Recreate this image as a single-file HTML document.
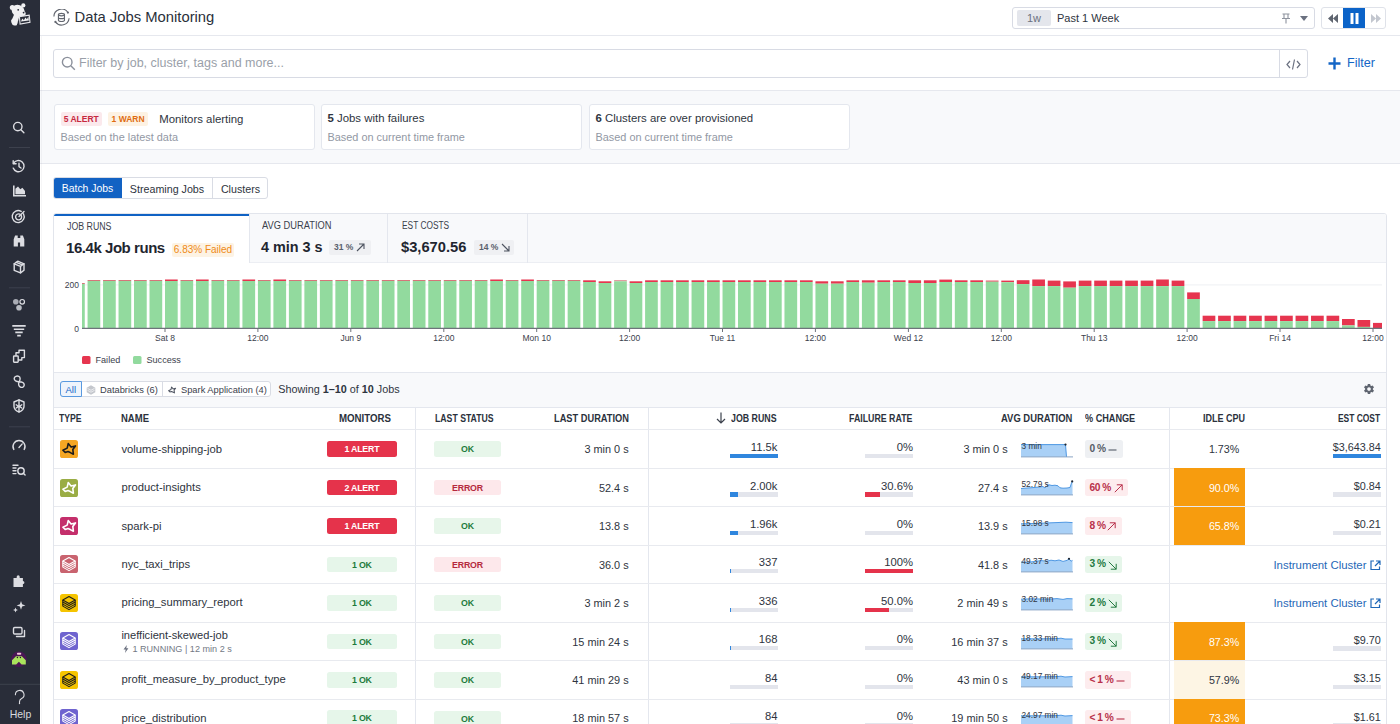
<!DOCTYPE html>
<html><head><meta charset="utf-8">
<style>
*{box-sizing:border-box;margin:0;padding:0}
html,body{width:1400px;height:724px;overflow:hidden;background:#fff;font-family:"Liberation Sans",sans-serif;color:#2e3440}
.abs{position:absolute}
.a{position:absolute}
.t{position:absolute;white-space:nowrap;line-height:1.15}
.bd{font-size:8.8px;font-weight:700;text-align:center;line-height:17.3px;letter-spacing:-0.2px;white-space:nowrap}
#sb{left:0;top:0;width:40px;height:724px;background:#292d39}
#hdr{left:40px;top:0;width:1360px;height:36px;background:#fff;border-bottom:1px solid #e6e8ee}
#srow{left:40px;top:36px;width:1360px;height:55px;background:#fff;border-bottom:1px solid #e6e8ee}
#sum{left:40px;top:91px;width:1360px;height:73px;background:#f8f9fb;border-bottom:1px solid #e6e8ee}
.card{position:absolute;top:13px;height:46px;width:261px;background:#fff;border:1px solid #e4e7ee;border-radius:3px}
.card .l1{position:absolute;left:5.5px;top:6.5px;font-size:11.4px;color:#2e3440;white-space:nowrap;display:flex;align-items:center}
.card .l2{position:absolute;left:5.5px;top:25.5px;font-size:10.9px;color:#9298a4;white-space:nowrap}
.tag{display:inline-block;font-size:8.5px;font-weight:700;padding:0 3.2px;height:14px;line-height:14px;border-radius:2px;margin-right:6.4px}
</style></head><body>
<div id="sb" class="abs">
<svg class="a" style="left:0;top:0" width="40" height="724" viewBox="0 0 40 724">
 <g fill="#f0f0f2">
  <!-- logo -->
  <ellipse cx="18" cy="10.6" rx="6.6" ry="5.6" transform="rotate(20 18 10.6)"/>
  <circle cx="12.3" cy="7.4" r="2.5"/><circle cx="23.3" cy="5.4" r="2.1"/>
  <ellipse cx="22.3" cy="13.6" rx="3.4" ry="2.6"/>
  <path d="M14.5 13.5 L19.5 15.5 L18.2 20.5 L16.5 25.5 L12.2 24 L11.6 20.5 Z"/>
  <ellipse cx="14.3" cy="22" rx="2.9" ry="3.6" transform="rotate(-20 14.3 22)"/>
 </g>
 <path d="M19.4 16.6 L29.2 15.2 L30 22.4 L20.1 24 Z" fill="#292d39" stroke="#e6e6ea" stroke-width="1.1"/>
 <path d="M20.9 21.6 L22.4 18.6 L23.9 20.2 L25.4 17.6 L26.9 19.3 L28.4 16.6 L28.9 20.6 Z" fill="#f0f0f2"/>
 <circle cx="18.2" cy="9.8" r="0.9" fill="#292d39"/><circle cx="23.6" cy="12.6" r="0.9" fill="#292d39"/>
 <g fill="none" stroke="#dcdde2" stroke-width="1.4" stroke-linecap="round" stroke-linejoin="round">
  <!-- search 127.6 -->
  <circle cx="17.8" cy="126.6" r="4.2"/><path d="M20.9 129.7l3 3"/>
  <!-- history 166.3 -->
  <path d="M13.5 163.5a5.6 5.6 0 1 1 -0.3 4.6"/><path d="M13.2 160.8v2.9h2.9"/><path d="M19 163.3v3.3l2 1.4"/>
  <!-- target 216.6 -->
  <path d="M23.5 213.8a6 6 0 1 1-2.3-2.4"/><path d="M21.3 215.6a3 3 0 1 1-1.4-1.4"/><path d="M19 216.5l5-5"/>
  <!-- cube 267 -->
  <path d="M14.2 263.8l3.5-2.6 6.3 2.6v6.4l-3.5 2.7-6.3-2.6z"/><path d="M14.2 263.8l6.3 2.6 3.5-2.6M20.5 266.4v6.5M16.2 262.3l6.2 2.6"/>
  <!-- squares 356 -->
  <rect x="13.6" y="356" width="4.6" height="6.2" rx="0.6"/><path d="M16 355.4v-2.6h3v-2.6h5.4v7.4h-2.6v2.4h-3.4"/>
  <!-- infinity link 381.8 -->
  <path d="M19.2 381.7 C16.5 381.8 14 380.5 14.2 378.4 C14.4 376.3 17 375.6 18.8 376.4 C20.6 377.2 20.4 379.8 19.2 381.7 C18 383.6 18.6 386.8 20.8 387.3 C23 387.8 24.4 386 24.2 384.6 C24 383 22 381.7 19.2 381.7"/>
  <!-- shield 406 -->
  <path d="M19 399.8l5 2.2v4.2c0 3-2.3 4.8-5 5.8-2.7-1-5-2.8-5-5.8v-4.2z"/><path d="M19 400v11.8M16.2 404.8l2.8 2 2.8-2M16.2 408l2.8-1.8 2.8 1.8"/>
  <!-- gauge 445.7 -->
  <path d="M13.8 449.5a6 6 0 1 1 10.4 0"/><path d="M19 447.5l3.2-3.6"/>
  <!-- config 470 -->
  <path d="M13 465.2h5M13 468h3M13 470.8h3M13 473.6h3"/><circle cx="21" cy="471" r="3.2"/><path d="M23.3 473.3l1.8 1.8"/>
  <!-- sparkles 606.5 -->
  <!-- copy 632 -->
  <rect x="13.5" y="627.5" width="8.5" height="6.5" rx="1.2"/><path d="M16.5 636.5h8v-6"/>
  <!-- help ? -->
  <path d="M15.4 694.8a4.3 4.3 0 1 1 6.2 3.8c-1.4.7-2.1 1.5-2.1 3.2v.8" stroke-width="1.1"/><path d="M19.5 703.2v.3" stroke-width="1.3"/>
 </g>
 <g fill="#dcdde2">
  <!-- area chart 191 -->
  <path d="M13 185.5h1.6v9.5h11.4v1.6H13z"/><path d="M15.4 194.2v-5.5l2.6-2.3 2.3 2.9 2.1-1.6 2.6 3.2v3.3z"/>
  <!-- binoculars 242.3 -->
  <path d="M13.7 239.2l1.4-3.7h2.6v2.4h2.6v-2.4h2.6l1.4 3.7v7.3h-4.2v-4h-2.2v4h-4.2z"/>
  <!-- hexagons 303.7 -->
  <circle cx="15.8" cy="301.8" r="2.8" fill="#a9acb4"/><circle cx="22.2" cy="301.8" r="2.3" fill="none" stroke="#dcdde2" stroke-width="1.2"/><circle cx="19" cy="307.8" r="2.8" fill="#b9bcc3"/>
  <!-- filter lines 331 -->
  <path d="M12.3 325h13.4v1.8H12.3zM13.8 328.4h10.4v1.6H13.8zM15.3 331.6h7.4v1.6h-7.4zM17.2 334.8h3.6v1.8h-3.6z"/>
  <!-- puzzle 581.5 -->
  <path d="M13.5 578h3.2v-1.2a1.5 1.5 0 1 1 3 0V578h3.2v3a1.5 1.5 0 1 1 0 3v3h-9.4z"/>
  <!-- sparkles 606.5 -->
  <path d="M21 601l1.1 3.3 3.3 1.1-3.3 1.1-1.1 3.3-1.1-3.3-3.3-1.1 3.3-1.1z"/><path d="M15.5 607.6l.7 1.7 1.7.7-1.7.7-.7 1.7-.7-1.7-1.7-.7 1.7-.7z"/>
 </g>
 <!-- avatar 658.6 -->
 <circle cx="18.9" cy="659.2" r="7.8" fill="#4a1656"/>
 <path d="M12 660.2 L16 656.3 L21.8 656.3 L25.8 660.2 L25.8 664.5 L21.6 664.5 L18.9 661.8 L16.2 664.5 L12 664.5 Z" fill="#a9e45c"/>
 <rect x="17" y="652.8" width="4.2" height="2" rx="0.8" fill="#f0c4d8"/>
 <circle cx="17.4" cy="657.5" r="0.7" fill="#2a1030"/><circle cx="20.4" cy="657.5" r="0.7" fill="#2a1030"/>
 <!-- separators -->
 <g stroke="#3d414d" stroke-width="1"><path d="M9 147.5h21M9 287.8h21M9 426.8h21M0 684.3h40"/></g>
 <text x="20.5" y="718" font-family="Liberation Sans" font-size="10.5" fill="#d8dade" text-anchor="middle">Help</text>
</svg>
</div>
<div id="hdr" class="abs">
  <svg class="abs" style="left:13px;top:9px" width="18" height="18" viewBox="0 0 18 18" fill="none" stroke="#62666f" stroke-width="1.15">
    <path d="M0.9 7.6 A7.6 7.6 0 0 1 14.9 3.6"/><path d="M2.4 12.9 A7.6 7.6 0 0 0 16.1 9.2"/>
    <circle cx="14.9" cy="3.6" r="1.1" fill="#62666f" stroke="none"/><circle cx="2.4" cy="12.9" r="1.1" fill="#62666f" stroke="none"/>
    <ellipse cx="8.45" cy="5.6" rx="3" ry="1.25"/><path d="M5.45 5.6 v5.6 a3 1.25 0 0 0 6 0 v-5.6 M5.45 8.4 a3 1.25 0 0 0 6 0"/>
  </svg>
  <div class="abs" style="left:34.5px;top:8.5px;font-size:14.8px;color:#2a303a;white-space:nowrap">Data Jobs Monitoring</div>
  <div class="abs" style="left:972px;top:6.5px;width:303px;height:22.5px;border:1px solid #d8dbe4;border-radius:3px;background:#fff">
    <div class="abs" style="left:4px;top:2px;width:34px;height:16px;background:#e4e6ec;border-radius:2px;font-size:11px;line-height:16px;text-align:center;color:#6b7180">1w</div>
    <div class="abs" style="left:44px;top:4px;font-size:11px;color:#2e3440;white-space:nowrap">Past 1 Week</div>
    <svg class="abs" style="left:268px;top:5px" width="10" height="11" viewBox="0 0 10 11" fill="none" stroke="#8e939e" stroke-width="1.1"><path d="M1.5 1h7M3 1v4M7 1v4M1 5.5h8M5 5.5v5"/></svg>
    <svg class="abs" style="left:287px;top:8px" width="8" height="5" viewBox="0 0 8 5"><path d="M0 0h8L4 5z" fill="#6b7180"/></svg>
  </div>
  <div class="abs" style="left:1281px;top:6.5px;width:65px;height:22.5px;border:1px solid #dfe2e9;border-radius:3px;background:#fff;overflow:hidden">
    <svg class="abs" style="left:5px;top:5px" width="12" height="11" viewBox="0 0 12 11"><path d="M6 1L1 5.5 6 10zM11 1L6 5.5 11 10z" fill="#5f6570"/></svg>
    <div class="abs" style="left:21px;top:-1px;width:22px;height:22.5px;background:#0b63c8"></div>
    <svg class="abs" style="left:27.5px;top:5px" width="9" height="11" viewBox="0 0 9 11"><rect x="0.5" y="0" width="3" height="11" fill="#fff"/><rect x="5.5" y="0" width="3" height="11" fill="#fff"/></svg>
    <svg class="abs" style="left:48px;top:5px" width="12" height="11" viewBox="0 0 12 11"><path d="M1 1l5 4.5L1 10zM6 1l5 4.5L6 10z" fill="#c3c7cf"/></svg>
  </div>
</div>
<div id="srow" class="abs">
  <div class="abs" style="left:13px;top:13px;width:1255px;height:28.5px;border:1px solid #d8dbe4;border-radius:3px;background:#fff">
    <svg class="abs" style="left:7px;top:6px" width="15" height="15" viewBox="0 0 15 15" fill="none" stroke="#8b909b" stroke-width="1.4"><circle cx="6.2" cy="6.2" r="4.8"/><path d="M9.8 9.8l4 4"/></svg>
    <div class="abs" style="left:25px;top:6px;font-size:12.5px;color:#9a9fa9;white-space:nowrap">Filter by job, cluster, tags and more...</div>
    <div class="abs" style="left:1225px;top:-1px;width:1px;height:28.5px;background:#d8dbe4"></div>
    <svg class="abs" style="left:1232px;top:7.5px" width="15" height="13" viewBox="0 0 15 13" fill="none" stroke="#6b7180" stroke-width="1.2"><path d="M4 3L1 6.5 4 10M11 3l3 3.5L11 10M8.5 1.5L6.5 11.5"/></svg>
  </div>
  <svg class="abs" style="left:1287.5px;top:21px" width="13" height="13" viewBox="0 0 13 13"><path d="M6.5 0.5v12M0.5 6.5h12" stroke="#1466c6" stroke-width="2.4"/></svg>
  <div class="abs" style="left:1307px;top:19.8px;font-size:12.6px;color:#1466c6;white-space:nowrap">Filter</div>
</div>
<div id="sum" class="abs">
  <div class="card" style="left:14px"><div class="l1"><span class="tag" style="background:#fbe9ec;color:#c7283f">5 ALERT</span><span class="tag" style="background:#fdf2e3;color:#e06c10">1 WARN</span><span style="margin-left:5px">Monitors alerting</span></div><div class="l2">Based on the latest data</div></div>
  <div class="card" style="left:281px"><div class="l1"><b>5</b>&nbsp;Jobs with failures</div><div class="l2">Based on current time frame</div></div>
  <div class="card" style="left:549px"><div class="l1"><b>6</b>&nbsp;Clusters are over provisioned</div><div class="l2">Based on current time frame</div></div>
</div>

<!-- tabs -->
<div class="abs" style="left:53px;top:177px;width:215px;height:22px;border:1px solid #d9dce4;border-radius:3px;background:#fff;overflow:hidden">
  <div class="abs" style="left:-1px;top:-1px;width:69px;height:22px;background:#1262c3;color:#fff;font-size:10.4px;line-height:24.5px;text-align:center;white-space:nowrap">Batch Jobs</div>
  <div class="abs" style="left:68px;top:0;width:91px;height:20px;border-right:1px solid #d9dce4;color:#2e3440;font-size:10.7px;line-height:22.5px;text-align:center;white-space:nowrap">Streaming Jobs</div>
  <div class="abs" style="left:159px;top:0;width:55px;height:20px;color:#2e3440;font-size:10.7px;line-height:22.5px;text-align:center;white-space:nowrap">Clusters</div>
</div>
<!-- panel -->
<div class="abs" style="left:53px;top:213px;width:1334px;height:520px;border:1px solid #e2e5ec;border-radius:3px;background:#fff;overflow:hidden">
  <div class="abs" style="left:0;top:0;width:1334px;height:49px;background:#f8f9fb;border-bottom:1px solid #eceef3"></div>
  <div class="abs" style="left:0;top:-1px;width:195px;height:50px;background:#fff;border-top:3px solid #0f62c4"></div>
  <div class="abs" style="left:195px;top:0;width:139px;height:49px;border-right:1px solid #e4e7ee;border-left:1px solid #e4e7ee"></div>
  <div class="abs" style="left:334px;top:0;width:140px;height:49px;border-right:1px solid #e4e7ee"></div>
  <div class="abs mt" style="left:12.5px;top:6.7px;font-size:10px;color:#3b414c;transform:scaleX(0.88);transform-origin:0 0;white-space:nowrap">JOB RUNS</div>
  <div class="abs mv" style="left:12px;top:24.5px;font-size:15px;font-weight:700;letter-spacing:-0.45px;color:#1f2630">16.4k Job runs</div>
  <div class="abs" style="left:118px;top:29px;width:62px;height:14px;background:#fdf3e4;color:#ef8a16;font-size:10px;line-height:14px;text-align:center;white-space:nowrap;border-radius:2px">6.83% Failed</div>
  <div class="abs mt" style="left:207.5px;top:6.4px;font-size:10px;color:#3b414c;transform:scaleX(0.93);transform-origin:0 0;white-space:nowrap">AVG DURATION</div>
  <div class="abs mv" style="left:207px;top:24.5px;font-size:14.4px;font-weight:700;color:#1f2630">4 min 3 s</div>
  <div class="abs" style="left:275px;top:25.5px;width:42px;height:15.5px;background:#eff0f3;border-radius:2px;white-space:nowrap">
    <span class="abs" style="left:5px;top:2.5px;font-size:8.5px;font-weight:700;color:#5a606c">31 %</span>
    <svg class="abs" style="left:27px;top:3.3px" width="9" height="9" viewBox="0 0 9 9" fill="none" stroke="#4e5461" stroke-width="1.1"><path d="M1 8L8 1M3 1h5v5"/></svg>
  </div>
  <div class="abs mt" style="left:347.5px;top:6.4px;font-size:10px;color:#3b414c;transform:scaleX(0.835);transform-origin:0 0;white-space:nowrap">EST COSTS</div>
  <div class="abs mv" style="left:347px;top:24.5px;font-size:14.7px;font-weight:700;color:#1f2630">$3,670.56</div>
  <div class="abs" style="left:420px;top:25.5px;width:40px;height:15.5px;background:#eff0f3;border-radius:2px;white-space:nowrap">
    <span class="abs" style="left:5px;top:2.5px;font-size:8.5px;font-weight:700;color:#5a606c">14 %</span>
    <svg class="abs" style="left:27px;top:3.3px" width="9" height="9" viewBox="0 0 9 9" fill="none" stroke="#4e5461" stroke-width="1.1"><path d="M1 1L8 8M8 3v5H3"/></svg>
  </div>
  <!-- toolbar -->
  <div class="abs" style="left:0;top:158px;width:1334px;height:36px;background:#f8f9fb;border-top:1px solid #e4e7ee;border-bottom:1px solid #e4e7ee"></div>
</div>
<svg class="abs" style="left:0;top:0" width="1400" height="724">
  <line x1="82" y1="284.9" x2="1382" y2="284.9" stroke="#eef0f3" stroke-width="1"/>
<rect x="82.00" y="283.00" width="2.77" height="1.00" fill="#d4767a"/>
<rect x="82.00" y="284.00" width="2.77" height="44.00" fill="#92da9e"/>
<rect x="87.56" y="280.00" width="12.70" height="1.00" fill="#d4767a"/>
<rect x="87.56" y="281.00" width="12.70" height="47.00" fill="#92da9e"/>
<rect x="103.05" y="280.00" width="12.70" height="1.00" fill="#d4767a"/>
<rect x="103.05" y="281.00" width="12.70" height="47.00" fill="#92da9e"/>
<rect x="118.53" y="280.00" width="12.70" height="1.00" fill="#d4767a"/>
<rect x="118.53" y="281.00" width="12.70" height="47.00" fill="#92da9e"/>
<rect x="134.02" y="280.00" width="12.70" height="1.00" fill="#d4767a"/>
<rect x="134.02" y="281.00" width="12.70" height="47.00" fill="#92da9e"/>
<rect x="149.51" y="280.00" width="12.70" height="1.00" fill="#d4767a"/>
<rect x="149.51" y="281.00" width="12.70" height="47.00" fill="#92da9e"/>
<rect x="165.00" y="279.50" width="12.70" height="1.50" fill="#e6354f"/>
<rect x="165.00" y="281.00" width="12.70" height="47.00" fill="#92da9e"/>
<rect x="180.48" y="280.00" width="12.70" height="1.00" fill="#d4767a"/>
<rect x="180.48" y="281.00" width="12.70" height="47.00" fill="#92da9e"/>
<rect x="195.97" y="279.50" width="12.70" height="1.50" fill="#e6354f"/>
<rect x="195.97" y="281.00" width="12.70" height="47.00" fill="#92da9e"/>
<rect x="211.46" y="280.00" width="12.70" height="1.00" fill="#d4767a"/>
<rect x="211.46" y="281.00" width="12.70" height="47.00" fill="#92da9e"/>
<rect x="226.94" y="280.00" width="12.70" height="1.00" fill="#d4767a"/>
<rect x="226.94" y="281.00" width="12.70" height="47.00" fill="#92da9e"/>
<rect x="242.43" y="279.50" width="12.70" height="1.50" fill="#e6354f"/>
<rect x="242.43" y="281.00" width="12.70" height="47.00" fill="#92da9e"/>
<rect x="257.92" y="280.00" width="12.70" height="1.00" fill="#d4767a"/>
<rect x="257.92" y="281.00" width="12.70" height="47.00" fill="#92da9e"/>
<rect x="273.40" y="279.50" width="12.70" height="1.50" fill="#e6354f"/>
<rect x="273.40" y="281.00" width="12.70" height="47.00" fill="#92da9e"/>
<rect x="288.89" y="280.00" width="12.70" height="1.00" fill="#d4767a"/>
<rect x="288.89" y="281.00" width="12.70" height="47.00" fill="#92da9e"/>
<rect x="304.38" y="280.00" width="12.70" height="1.00" fill="#d4767a"/>
<rect x="304.38" y="281.00" width="12.70" height="47.00" fill="#92da9e"/>
<rect x="319.87" y="280.00" width="12.70" height="1.00" fill="#d4767a"/>
<rect x="319.87" y="281.00" width="12.70" height="47.00" fill="#92da9e"/>
<rect x="335.35" y="280.00" width="12.70" height="1.00" fill="#d4767a"/>
<rect x="335.35" y="281.00" width="12.70" height="47.00" fill="#92da9e"/>
<rect x="350.84" y="280.00" width="12.70" height="1.00" fill="#d4767a"/>
<rect x="350.84" y="281.00" width="12.70" height="47.00" fill="#92da9e"/>
<rect x="366.33" y="280.00" width="12.70" height="1.00" fill="#d4767a"/>
<rect x="366.33" y="281.00" width="12.70" height="47.00" fill="#92da9e"/>
<rect x="381.81" y="280.00" width="12.70" height="1.00" fill="#d4767a"/>
<rect x="381.81" y="281.00" width="12.70" height="47.00" fill="#92da9e"/>
<rect x="397.30" y="280.00" width="12.70" height="1.00" fill="#d4767a"/>
<rect x="397.30" y="281.00" width="12.70" height="47.00" fill="#92da9e"/>
<rect x="412.79" y="280.00" width="12.70" height="1.00" fill="#d4767a"/>
<rect x="412.79" y="281.00" width="12.70" height="47.00" fill="#92da9e"/>
<rect x="428.27" y="280.00" width="12.70" height="1.00" fill="#d4767a"/>
<rect x="428.27" y="281.00" width="12.70" height="47.00" fill="#92da9e"/>
<rect x="443.76" y="280.00" width="12.70" height="1.00" fill="#d4767a"/>
<rect x="443.76" y="281.00" width="12.70" height="47.00" fill="#92da9e"/>
<rect x="459.25" y="280.00" width="12.70" height="1.00" fill="#d4767a"/>
<rect x="459.25" y="281.00" width="12.70" height="47.00" fill="#92da9e"/>
<rect x="474.74" y="280.00" width="12.70" height="1.00" fill="#d4767a"/>
<rect x="474.74" y="281.00" width="12.70" height="47.00" fill="#92da9e"/>
<rect x="490.22" y="279.50" width="12.70" height="1.50" fill="#e6354f"/>
<rect x="490.22" y="281.00" width="12.70" height="47.00" fill="#92da9e"/>
<rect x="505.71" y="280.00" width="12.70" height="1.00" fill="#d4767a"/>
<rect x="505.71" y="281.00" width="12.70" height="47.00" fill="#92da9e"/>
<rect x="521.20" y="279.50" width="12.70" height="1.50" fill="#e6354f"/>
<rect x="521.20" y="281.00" width="12.70" height="47.00" fill="#92da9e"/>
<rect x="536.68" y="280.00" width="12.70" height="1.00" fill="#d4767a"/>
<rect x="536.68" y="281.00" width="12.70" height="47.00" fill="#92da9e"/>
<rect x="552.17" y="280.00" width="12.70" height="1.00" fill="#d4767a"/>
<rect x="552.17" y="281.00" width="12.70" height="47.00" fill="#92da9e"/>
<rect x="567.66" y="280.00" width="12.70" height="1.00" fill="#d4767a"/>
<rect x="567.66" y="281.00" width="12.70" height="47.00" fill="#92da9e"/>
<rect x="583.14" y="280.30" width="12.70" height="1.70" fill="#e6354f"/>
<rect x="583.14" y="282.00" width="12.70" height="46.00" fill="#92da9e"/>
<rect x="598.63" y="281.30" width="12.70" height="1.70" fill="#e6354f"/>
<rect x="598.63" y="283.00" width="12.70" height="45.00" fill="#92da9e"/>
<rect x="614.12" y="280.30" width="12.70" height="1.00" fill="#d4767a"/>
<rect x="614.12" y="281.30" width="12.70" height="46.70" fill="#92da9e"/>
<rect x="629.61" y="281.30" width="12.70" height="1.70" fill="#e6354f"/>
<rect x="629.61" y="283.00" width="12.70" height="45.00" fill="#92da9e"/>
<rect x="645.09" y="280.30" width="12.70" height="1.70" fill="#e6354f"/>
<rect x="645.09" y="282.00" width="12.70" height="46.00" fill="#92da9e"/>
<rect x="660.58" y="280.30" width="12.70" height="1.70" fill="#e6354f"/>
<rect x="660.58" y="282.00" width="12.70" height="46.00" fill="#92da9e"/>
<rect x="676.07" y="280.30" width="12.70" height="1.70" fill="#e6354f"/>
<rect x="676.07" y="282.00" width="12.70" height="46.00" fill="#92da9e"/>
<rect x="691.55" y="280.30" width="12.70" height="1.70" fill="#e6354f"/>
<rect x="691.55" y="282.00" width="12.70" height="46.00" fill="#92da9e"/>
<rect x="707.04" y="280.30" width="12.70" height="1.70" fill="#e6354f"/>
<rect x="707.04" y="282.00" width="12.70" height="46.00" fill="#92da9e"/>
<rect x="722.53" y="280.30" width="12.70" height="1.70" fill="#e6354f"/>
<rect x="722.53" y="282.00" width="12.70" height="46.00" fill="#92da9e"/>
<rect x="738.01" y="280.30" width="12.70" height="1.70" fill="#e6354f"/>
<rect x="738.01" y="282.00" width="12.70" height="46.00" fill="#92da9e"/>
<rect x="753.50" y="280.30" width="12.70" height="1.70" fill="#e6354f"/>
<rect x="753.50" y="282.00" width="12.70" height="46.00" fill="#92da9e"/>
<rect x="768.99" y="280.30" width="12.70" height="1.70" fill="#e6354f"/>
<rect x="768.99" y="282.00" width="12.70" height="46.00" fill="#92da9e"/>
<rect x="784.47" y="280.30" width="12.70" height="1.70" fill="#e6354f"/>
<rect x="784.47" y="282.00" width="12.70" height="46.00" fill="#92da9e"/>
<rect x="799.96" y="280.30" width="12.70" height="1.70" fill="#e6354f"/>
<rect x="799.96" y="282.00" width="12.70" height="46.00" fill="#92da9e"/>
<rect x="815.45" y="281.30" width="12.70" height="2.40" fill="#e6354f"/>
<rect x="815.45" y="283.70" width="12.70" height="44.30" fill="#92da9e"/>
<rect x="830.94" y="281.30" width="12.70" height="2.40" fill="#e6354f"/>
<rect x="830.94" y="283.70" width="12.70" height="44.30" fill="#92da9e"/>
<rect x="846.42" y="280.30" width="12.70" height="1.70" fill="#e6354f"/>
<rect x="846.42" y="282.00" width="12.70" height="46.00" fill="#92da9e"/>
<rect x="861.91" y="280.30" width="12.70" height="2.40" fill="#e6354f"/>
<rect x="861.91" y="282.70" width="12.70" height="45.30" fill="#92da9e"/>
<rect x="877.40" y="280.30" width="12.70" height="1.70" fill="#e6354f"/>
<rect x="877.40" y="282.00" width="12.70" height="46.00" fill="#92da9e"/>
<rect x="892.88" y="280.30" width="12.70" height="1.70" fill="#e6354f"/>
<rect x="892.88" y="282.00" width="12.70" height="46.00" fill="#92da9e"/>
<rect x="908.37" y="280.30" width="12.70" height="2.70" fill="#e6354f"/>
<rect x="908.37" y="283.00" width="12.70" height="45.00" fill="#92da9e"/>
<rect x="923.86" y="280.30" width="12.70" height="2.70" fill="#e6354f"/>
<rect x="923.86" y="283.00" width="12.70" height="45.00" fill="#92da9e"/>
<rect x="939.35" y="279.60" width="12.70" height="2.40" fill="#e6354f"/>
<rect x="939.35" y="282.00" width="12.70" height="46.00" fill="#92da9e"/>
<rect x="954.83" y="280.30" width="12.70" height="1.70" fill="#e6354f"/>
<rect x="954.83" y="282.00" width="12.70" height="46.00" fill="#92da9e"/>
<rect x="970.32" y="280.30" width="12.70" height="1.70" fill="#e6354f"/>
<rect x="970.32" y="282.00" width="12.70" height="46.00" fill="#92da9e"/>
<rect x="985.81" y="280.60" width="12.70" height="1.10" fill="#e6354f"/>
<rect x="985.81" y="281.70" width="12.70" height="46.30" fill="#92da9e"/>
<rect x="1001.29" y="280.60" width="12.70" height="1.60" fill="#e6354f"/>
<rect x="1001.29" y="282.20" width="12.70" height="45.80" fill="#92da9e"/>
<rect x="1016.78" y="280.20" width="12.70" height="3.90" fill="#e6354f"/>
<rect x="1016.78" y="284.10" width="12.70" height="43.90" fill="#92da9e"/>
<rect x="1032.27" y="279.50" width="12.70" height="6.60" fill="#e6354f"/>
<rect x="1032.27" y="286.10" width="12.70" height="41.90" fill="#92da9e"/>
<rect x="1047.75" y="280.60" width="12.70" height="5.50" fill="#e6354f"/>
<rect x="1047.75" y="286.10" width="12.70" height="41.90" fill="#92da9e"/>
<rect x="1063.24" y="281.40" width="12.70" height="6.30" fill="#e6354f"/>
<rect x="1063.24" y="287.70" width="12.70" height="40.30" fill="#92da9e"/>
<rect x="1078.73" y="280.60" width="12.70" height="5.50" fill="#e6354f"/>
<rect x="1078.73" y="286.10" width="12.70" height="41.90" fill="#92da9e"/>
<rect x="1094.21" y="280.60" width="12.70" height="5.50" fill="#e6354f"/>
<rect x="1094.21" y="286.10" width="12.70" height="41.90" fill="#92da9e"/>
<rect x="1109.70" y="280.60" width="12.70" height="5.50" fill="#e6354f"/>
<rect x="1109.70" y="286.10" width="12.70" height="41.90" fill="#92da9e"/>
<rect x="1125.19" y="280.60" width="12.70" height="5.50" fill="#e6354f"/>
<rect x="1125.19" y="286.10" width="12.70" height="41.90" fill="#92da9e"/>
<rect x="1140.68" y="280.60" width="12.70" height="5.50" fill="#e6354f"/>
<rect x="1140.68" y="286.10" width="12.70" height="41.90" fill="#92da9e"/>
<rect x="1156.16" y="279.50" width="12.70" height="6.60" fill="#e6354f"/>
<rect x="1156.16" y="286.10" width="12.70" height="41.90" fill="#92da9e"/>
<rect x="1171.65" y="280.60" width="12.70" height="5.50" fill="#e6354f"/>
<rect x="1171.65" y="286.10" width="12.70" height="41.90" fill="#92da9e"/>
<rect x="1187.14" y="292.40" width="12.70" height="6.60" fill="#e6354f"/>
<rect x="1187.14" y="299.00" width="12.70" height="29.00" fill="#92da9e"/>
<rect x="1202.62" y="315.70" width="12.70" height="5.40" fill="#e6354f"/>
<rect x="1202.62" y="321.10" width="12.70" height="6.90" fill="#92da9e"/>
<rect x="1218.11" y="315.70" width="12.70" height="5.40" fill="#e6354f"/>
<rect x="1218.11" y="321.10" width="12.70" height="6.90" fill="#92da9e"/>
<rect x="1233.60" y="315.70" width="12.70" height="5.40" fill="#e6354f"/>
<rect x="1233.60" y="321.10" width="12.70" height="6.90" fill="#92da9e"/>
<rect x="1249.09" y="315.70" width="12.70" height="5.40" fill="#e6354f"/>
<rect x="1249.09" y="321.10" width="12.70" height="6.90" fill="#92da9e"/>
<rect x="1264.57" y="315.70" width="12.70" height="5.40" fill="#e6354f"/>
<rect x="1264.57" y="321.10" width="12.70" height="6.90" fill="#92da9e"/>
<rect x="1280.06" y="315.70" width="12.70" height="5.40" fill="#e6354f"/>
<rect x="1280.06" y="321.10" width="12.70" height="6.90" fill="#92da9e"/>
<rect x="1295.55" y="315.70" width="12.70" height="5.40" fill="#e6354f"/>
<rect x="1295.55" y="321.10" width="12.70" height="6.90" fill="#92da9e"/>
<rect x="1311.03" y="315.70" width="12.70" height="5.40" fill="#e6354f"/>
<rect x="1311.03" y="321.10" width="12.70" height="6.90" fill="#92da9e"/>
<rect x="1326.52" y="315.70" width="12.70" height="5.40" fill="#e6354f"/>
<rect x="1326.52" y="321.10" width="12.70" height="6.90" fill="#92da9e"/>
<rect x="1342.01" y="319.00" width="12.70" height="6.40" fill="#e6354f"/>
<rect x="1342.01" y="325.40" width="12.70" height="2.60" fill="#92da9e"/>
<rect x="1357.49" y="320.00" width="12.70" height="6.90" fill="#e6354f"/>
<rect x="1357.49" y="326.90" width="12.70" height="1.10" fill="#92da9e"/>
<rect x="1372.98" y="322.90" width="9.02" height="5.10" fill="#e6354f"/>
  <line x1="82" y1="328.3" x2="1382" y2="328.3" stroke="#6e737b" stroke-width="1.2"/>
  <line x1="165.0" y1="328" x2="165.0" y2="332" stroke="#6e737b" stroke-width="1"/>
  <text x="165.0" y="341" font-family="Liberation Sans" font-size="8.5" fill="#3b414c" text-anchor="middle">Sat 8</text>
  <line x1="257.9" y1="328" x2="257.9" y2="332" stroke="#6e737b" stroke-width="1"/>
  <text x="257.9" y="341" font-family="Liberation Sans" font-size="8.5" fill="#3b414c" text-anchor="middle">12:00</text>
  <line x1="350.8" y1="328" x2="350.8" y2="332" stroke="#6e737b" stroke-width="1"/>
  <text x="350.8" y="341" font-family="Liberation Sans" font-size="8.5" fill="#3b414c" text-anchor="middle">Jun 9</text>
  <line x1="443.8" y1="328" x2="443.8" y2="332" stroke="#6e737b" stroke-width="1"/>
  <text x="443.8" y="341" font-family="Liberation Sans" font-size="8.5" fill="#3b414c" text-anchor="middle">12:00</text>
  <line x1="536.7" y1="328" x2="536.7" y2="332" stroke="#6e737b" stroke-width="1"/>
  <text x="536.7" y="341" font-family="Liberation Sans" font-size="8.5" fill="#3b414c" text-anchor="middle">Mon 10</text>
  <line x1="629.6" y1="328" x2="629.6" y2="332" stroke="#6e737b" stroke-width="1"/>
  <text x="629.6" y="341" font-family="Liberation Sans" font-size="8.5" fill="#3b414c" text-anchor="middle">12:00</text>
  <line x1="722.5" y1="328" x2="722.5" y2="332" stroke="#6e737b" stroke-width="1"/>
  <text x="722.5" y="341" font-family="Liberation Sans" font-size="8.5" fill="#3b414c" text-anchor="middle">Tue 11</text>
  <line x1="815.4" y1="328" x2="815.4" y2="332" stroke="#6e737b" stroke-width="1"/>
  <text x="815.4" y="341" font-family="Liberation Sans" font-size="8.5" fill="#3b414c" text-anchor="middle">12:00</text>
  <line x1="908.4" y1="328" x2="908.4" y2="332" stroke="#6e737b" stroke-width="1"/>
  <text x="908.4" y="341" font-family="Liberation Sans" font-size="8.5" fill="#3b414c" text-anchor="middle">Wed 12</text>
  <line x1="1001.3" y1="328" x2="1001.3" y2="332" stroke="#6e737b" stroke-width="1"/>
  <text x="1001.3" y="341" font-family="Liberation Sans" font-size="8.5" fill="#3b414c" text-anchor="middle">12:00</text>
  <line x1="1094.2" y1="328" x2="1094.2" y2="332" stroke="#6e737b" stroke-width="1"/>
  <text x="1094.2" y="341" font-family="Liberation Sans" font-size="8.5" fill="#3b414c" text-anchor="middle">Thu 13</text>
  <line x1="1187.1" y1="328" x2="1187.1" y2="332" stroke="#6e737b" stroke-width="1"/>
  <text x="1187.1" y="341" font-family="Liberation Sans" font-size="8.5" fill="#3b414c" text-anchor="middle">12:00</text>
  <line x1="1280.0" y1="328" x2="1280.0" y2="332" stroke="#6e737b" stroke-width="1"/>
  <text x="1280.0" y="341" font-family="Liberation Sans" font-size="8.5" fill="#3b414c" text-anchor="middle">Fri 14</text>
  <line x1="1373.0" y1="328" x2="1373.0" y2="332" stroke="#6e737b" stroke-width="1"/>
  <text x="1373.0" y="341" font-family="Liberation Sans" font-size="8.5" fill="#3b414c" text-anchor="middle">12:00</text>
  <text x="79" y="288" font-family="Liberation Sans" font-size="8.5" fill="#3b414c" text-anchor="end" font-size-adjust="none">200</text>
  <text x="79" y="332" font-family="Liberation Sans" font-size="8.5" fill="#3b414c" text-anchor="end">0</text>
  <rect x="82" y="356" width="8.5" height="8" rx="1.5" fill="#e6354f"/><text x="95.5" y="363" font-family="Liberation Sans" font-size="9.1" fill="#3b414c">Failed</text>
  <rect x="133" y="356" width="8.5" height="8" rx="1.5" fill="#92da9e"/><text x="146.5" y="363" font-family="Liberation Sans" font-size="9.1" fill="#3b414c">Success</text>
</svg>

<!-- toolbar content -->
<div class="a" style="left:60px;top:381px;width:211px;height:16px;border:1px solid #d9dce4;border-radius:3px;background:#fff"></div>
<div class="a" style="left:60px;top:381px;width:21.5px;height:16px;border:1px solid #5a9ae0;border-radius:3px 0 0 3px;background:#eef4fc;color:#1466c6;font-size:9.5px;line-height:16.5px;text-align:center">All</div>
<div class="a" style="left:161.5px;top:382px;width:1px;height:14px;background:#d9dce4"></div>
<svg class="a" style="left:86px;top:384.5px" width="10" height="10" viewBox="0 0 10 10"><path d="M5 0.3L9.3 2.7v4.6L5 9.7 0.7 7.3V2.7z" fill="#c4c7cd"/><path d="M1.5 3.4L5 5.3l3.5-1.9M1.5 5.3L5 7.2l3.5-1.9" fill="none" stroke="#f4f5f7" stroke-width="0.8"/></svg>
<div class="t" style="left:100px;top:384.5px;font-size:9.3px;color:#3b414c">Databricks (6)</div>
<svg class="a" style="left:166.5px;top:384.5px" width="10" height="10" viewBox="0 0 18 18"><path d="M2.9 10.2 L7.2 8.1 L8.2 3.6 L11.1 7.1 L15.5 5.9 L12.8 9.4 L13.4 14.2 L10.3 12.6 L8 11.6 L5.2 12.4 Z" fill="none" stroke="#4e5461" stroke-width="1.9" stroke-linejoin="round"/></svg>
<div class="t" style="left:181px;top:384.5px;font-size:9.3px;color:#3b414c">Spark Application (4)</div>
<div class="t" style="left:278.3px;top:383.3px;font-size:10.8px;color:#2e3440">Showing <b style="font-weight:700">1–10</b> of <b style="font-weight:700">10</b> Jobs</div>
<svg class="a" style="left:1363px;top:383px" width="12" height="12" viewBox="0 0 12 12"><path fill="#5f6570" fill-rule="evenodd" d="M4.54 2.38 L4.83 0.93 L7.17 0.93 L7.46 2.38 L8.40 2.93 L9.80 2.45 L10.97 4.48 L9.86 5.46 L9.86 6.54 L10.97 7.52 L9.80 9.55 L8.40 9.07 L7.46 9.62 L7.17 11.07 L4.83 11.07 L4.54 9.62 L3.60 9.07 L2.20 9.55 L1.03 7.52 L2.14 6.54 L2.14 5.46 L1.03 4.48 L2.20 2.45 L3.60 2.93 Z M6 4.2 a1.8 1.8 0 1 0 0.001 0 Z"/></svg>
<div class="a" style="left:54px;top:406.5px;width:1332px;height:1px;background:#e4e7ee"></div>
<!-- column dividers -->
<div class="a" style="left:415px;top:407px;width:1px;height:320px;background:#e4e7ee"></div>
<div class="a" style="left:647.5px;top:407px;width:1px;height:320px;background:#e4e7ee"></div>
<div class="a" style="left:1169px;top:407px;width:1px;height:320px;background:#e4e7ee"></div>
<div class="t" style="left:59.4px;top:412.6px;font-size:10.2px;font-weight:700;color:#2b313c;transform:scaleX(0.850);transform-origin:0 0">TYPE</div>
<div class="t" style="left:121.4px;top:412.6px;font-size:10.2px;font-weight:700;color:#2b313c;transform:scaleX(0.933);transform-origin:0 0">NAME</div>
<div class="t" style="left:339.0px;top:412.6px;font-size:10.2px;font-weight:700;color:#2b313c;transform:scaleX(0.949);transform-origin:0 0">MONITORS</div>
<div class="t" style="left:435.0px;top:412.6px;font-size:10.2px;font-weight:700;color:#2b313c;transform:scaleX(0.854);transform-origin:0 0">LAST STATUS</div>
<div class="t" style="left:553.7px;top:412.6px;font-size:10.2px;font-weight:700;color:#2b313c;transform:scaleX(0.909);transform-origin:0 0">LAST DURATION</div>
<div class="t" style="left:731.4px;top:412.6px;font-size:10.2px;font-weight:700;color:#2b313c;transform:scaleX(0.865);transform-origin:0 0">JOB RUNS</div>
<div class="t" style="left:849.0px;top:412.6px;font-size:10.2px;font-weight:700;color:#2b313c;transform:scaleX(0.864);transform-origin:0 0">FAILURE RATE</div>
<div class="t" style="left:1001.0px;top:412.6px;font-size:10.2px;font-weight:700;color:#2b313c;transform:scaleX(0.925);transform-origin:0 0">AVG DURATION</div>
<div class="t" style="left:1084.8px;top:412.6px;font-size:10.2px;font-weight:700;color:#2b313c;transform:scaleX(0.896);transform-origin:0 0">% CHANGE</div>
<div class="t" style="left:1202.7px;top:412.6px;font-size:10.2px;font-weight:700;color:#2b313c;transform:scaleX(0.884);transform-origin:0 0">IDLE CPU</div>
<div class="t" style="left:1338.1px;top:412.6px;font-size:10.2px;font-weight:700;color:#2b313c;transform:scaleX(0.827);transform-origin:0 0">EST COST</div>
<svg class="a" style="left:716px;top:412px" width="10" height="12" viewBox="0 0 10 12" fill="none" stroke="#3b414c" stroke-width="1.2"><path d="M5 0.5v10.5M1 7l4 4 4-4"/></svg>
<div class="a" style="left:54px;top:429.3px;width:1332px;height:1px;background:#e8eaef"></div>
<div class="t" style="left:839.2px;width:400px;text-align:right;top:443.1px;font-size:10.7px;color:#2e3440;font-weight:400;">1.73%</div>
<svg class="a" style="left:59.8px;top:440.0px" width="18" height="18" viewBox="0 0 18 18"><rect width="18" height="18" rx="2.6" fill="#f5a623"/><path d="M2.9 10.2 L7.2 8.1 L8.2 3.6 L11.1 7.1 L15.5 5.9 L12.8 9.4 L13.4 14.2 L10.3 12.6 L8 11.6 L5.2 12.4 Z" fill="none" stroke="#1c1c1c" stroke-width="1.6" stroke-linejoin="round"/></svg>
<div class="t" style="left:121.4px;top:442.5px;font-size:11.25px;color:#2e3440;font-weight:400;">volume-shipping-job</div>
<div class="a bd" style="left:326.6px;top:441.1px;width:70.5px;height:15.8px;background:#e5334b;color:#fff;border-radius:2.5px">1 ALERT</div>
<div class="a bd" style="left:434px;top:441.3px;width:67px;height:15.5px;background:#e7f6ea;color:#1e7b3c;border-radius:2.5px">OK</div>
<div class="t" style="left:228.6px;width:400px;text-align:right;top:443.1px;font-size:10.9px;color:#2e3440;font-weight:400;">3 min 0 s</div>
<div class="t" style="left:377.5px;width:400px;text-align:right;top:441.0px;font-size:11.25px;color:#2e3440;font-weight:400;">11.5k</div>
<div class="a" style="left:729.5px;top:453.9px;width:48px;height:4.2px;background:#e3e5ec"></div>
<div class="a" style="left:729.5px;top:453.9px;width:48px;height:4.2px;background:#2f86de"></div>
<div class="t" style="left:513.0px;width:400px;text-align:right;top:441.0px;font-size:11.25px;color:#2e3440;font-weight:400;">0%</div>
<div class="a" style="left:865.3px;top:453.9px;width:47.7px;height:4.2px;background:#e3e5ec"></div>
<div class="t" style="left:607.6px;width:400px;text-align:right;top:443.1px;font-size:10.9px;color:#2e3440;font-weight:400;">3 min 0 s</div>
<svg class="a" style="left:1021px;top:440.5px" width="52" height="18" viewBox="0 0 52 18" overflow="visible"><path d="M0 3.6 L44.5 3.6 L45.5 15.8 L0 15.8 Z" fill="#a9d0f6"/><path d="M0 3.6 L44.5 3.6 L45.5 15.8" fill="none" stroke="#3f8fe0" stroke-width="0.9"/><line x1="0" y1="15.9" x2="52" y2="15.9" stroke="#7d9bbd" stroke-width="0.9"/><circle cx="44.5" cy="3.6" r="1.1" fill="#1f2630"/><text x="0.5" y="8.2" font-family="Liberation Sans" font-size="8.3" fill="#2f3540">3 min</text></svg>
<div class="a" style="left:1084.8px;top:440.2px;width:38px;height:17.5px;background:#eef0f3;border-radius:2.5px"><div class="t" style="left:4.8px;top:2.9px;font-size:10.2px;letter-spacing:-0.5px;font-weight:700;color:#555b66">0 %</div><svg class="a" style="right:6px;top:8.5px" width="9" height="2" viewBox="0 0 9 2"><path d="M0.5 1h8" stroke="#555b66" stroke-width="1.1"/></svg></div>
<div class="t" style="left:980.8px;width:400px;text-align:right;top:441.3px;font-size:10.8px;color:#2e3440;font-weight:400;">$3,643.84</div>
<div class="a" style="left:1333px;top:453.9px;width:48px;height:4.5px;background:#e3e5ec"></div>
<div class="a" style="left:1333px;top:453.9px;width:48px;height:4.5px;background:#2f86de"></div>
<div class="a" style="left:54px;top:467.8px;width:1332px;height:1px;background:#e8eaef"></div>
<div class="a" style="left:1174.4px;top:468.4px;width:71px;height:38.1px;background:#f79c0e"></div>
<div class="t" style="left:839.2px;width:400px;text-align:right;top:481.6px;font-size:10.7px;color:#fff;font-weight:400;">90.0%</div>
<svg class="a" style="left:59.8px;top:478.5px" width="18" height="18" viewBox="0 0 18 18"><rect width="18" height="18" rx="2.6" fill="#9aad45"/><path d="M2.9 10.2 L7.2 8.1 L8.2 3.6 L11.1 7.1 L15.5 5.9 L12.8 9.4 L13.4 14.2 L10.3 12.6 L8 11.6 L5.2 12.4 Z" fill="none" stroke="#fff" stroke-width="1.6" stroke-linejoin="round"/></svg>
<div class="t" style="left:121.4px;top:481.0px;font-size:11.25px;color:#2e3440;font-weight:400;">product-insights</div>
<div class="a bd" style="left:326.6px;top:479.6px;width:70.5px;height:15.8px;background:#e5334b;color:#fff;border-radius:2.5px">2 ALERT</div>
<div class="a bd" style="left:434px;top:479.8px;width:67px;height:15.5px;background:#fde8eb;color:#b5283d;border-radius:2.5px">ERROR</div>
<div class="t" style="left:228.6px;width:400px;text-align:right;top:481.6px;font-size:10.9px;color:#2e3440;font-weight:400;">52.4 s</div>
<div class="t" style="left:377.5px;width:400px;text-align:right;top:479.5px;font-size:11.25px;color:#2e3440;font-weight:400;">2.00k</div>
<div class="a" style="left:729.5px;top:492.4px;width:48px;height:4.2px;background:#e3e5ec"></div>
<div class="a" style="left:729.5px;top:492.4px;width:8px;height:4.2px;background:#2f86de"></div>
<div class="t" style="left:513.0px;width:400px;text-align:right;top:479.5px;font-size:11.25px;color:#2e3440;font-weight:400;">30.6%</div>
<div class="a" style="left:865.3px;top:492.4px;width:47.7px;height:4.2px;background:#e3e5ec"></div>
<div class="a" style="left:865.3px;top:492.4px;width:15px;height:4.2px;background:#e5334b"></div>
<div class="t" style="left:607.6px;width:400px;text-align:right;top:481.6px;font-size:10.9px;color:#2e3440;font-weight:400;">27.4 s</div>
<svg class="a" style="left:1021px;top:479.0px" width="52" height="18" viewBox="0 0 52 18" overflow="visible"><path d="M0 9.5 L6 9 L12 8.6 L18 8 L22 7.5 L24 9 L26 6.5 L28 5.8 L31 6.5 L34 6.2 L37 6.8 L39 8.8 L42 9.2 L46 9 L49 8.5 L50.5 4 L51.5 2.2 L51.5 15.8 L0 15.8 Z" fill="#a9d0f6"/><path d="M0 9.5 L6 9 L12 8.6 L18 8 L22 7.5 L24 9 L26 6.5 L28 5.8 L31 6.5 L34 6.2 L37 6.8 L39 8.8 L42 9.2 L46 9 L49 8.5 L50.5 4 L51.5 2.2" fill="none" stroke="#3f8fe0" stroke-width="0.9"/><line x1="0" y1="15.9" x2="52" y2="15.9" stroke="#7d9bbd" stroke-width="0.9"/><circle cx="51.2" cy="2.4" r="1.1" fill="#1f2630"/><text x="0.5" y="8.2" font-family="Liberation Sans" font-size="8.3" fill="#2f3540">52.79 s</text></svg>
<div class="a" style="left:1084.8px;top:478.7px;width:43.4px;height:17.5px;background:#fdecee;border-radius:2.5px"><div class="t" style="left:4.8px;top:2.9px;font-size:10.2px;letter-spacing:-0.5px;font-weight:700;color:#b8304a">60 %</div><svg class="a" style="right:5.5px;top:5px" width="9" height="9" viewBox="0 0 9 9" fill="none" stroke="#b8304a" stroke-width="1"><path d="M0.8 8.2L8.2 0.8M2.8 0.8h5.4v5.4"/></svg></div>
<div class="t" style="left:980.8px;width:400px;text-align:right;top:479.8px;font-size:10.8px;color:#2e3440;font-weight:400;">$0.84</div>
<div class="a" style="left:1333px;top:492.4px;width:48px;height:4.5px;background:#e3e5ec"></div>
<div class="a" style="left:54px;top:506.2px;width:1332px;height:1px;background:#e8eaef"></div>
<div class="a" style="left:1174.4px;top:506.8px;width:71px;height:38.1px;background:#f79c0e"></div>
<div class="t" style="left:839.2px;width:400px;text-align:right;top:520.1px;font-size:10.7px;color:#fff;font-weight:400;">65.8%</div>
<svg class="a" style="left:59.8px;top:517.0px" width="18" height="18" viewBox="0 0 18 18"><rect width="18" height="18" rx="2.6" fill="#c42f6b"/><path d="M2.9 10.2 L7.2 8.1 L8.2 3.6 L11.1 7.1 L15.5 5.9 L12.8 9.4 L13.4 14.2 L10.3 12.6 L8 11.6 L5.2 12.4 Z" fill="none" stroke="#fff" stroke-width="1.6" stroke-linejoin="round"/></svg>
<div class="t" style="left:121.4px;top:519.5px;font-size:11.25px;color:#2e3440;font-weight:400;">spark-pi</div>
<div class="a bd" style="left:326.6px;top:518.1px;width:70.5px;height:15.8px;background:#e5334b;color:#fff;border-radius:2.5px">1 ALERT</div>
<div class="a bd" style="left:434px;top:518.3px;width:67px;height:15.5px;background:#e7f6ea;color:#1e7b3c;border-radius:2.5px">OK</div>
<div class="t" style="left:228.6px;width:400px;text-align:right;top:520.1px;font-size:10.9px;color:#2e3440;font-weight:400;">13.8 s</div>
<div class="t" style="left:377.5px;width:400px;text-align:right;top:518.0px;font-size:11.25px;color:#2e3440;font-weight:400;">1.96k</div>
<div class="a" style="left:729.5px;top:530.9px;width:48px;height:4.2px;background:#e3e5ec"></div>
<div class="a" style="left:729.5px;top:530.9px;width:8px;height:4.2px;background:#2f86de"></div>
<div class="t" style="left:513.0px;width:400px;text-align:right;top:518.0px;font-size:11.25px;color:#2e3440;font-weight:400;">0%</div>
<div class="a" style="left:865.3px;top:530.9px;width:47.7px;height:4.2px;background:#e3e5ec"></div>
<div class="t" style="left:607.6px;width:400px;text-align:right;top:520.1px;font-size:10.9px;color:#2e3440;font-weight:400;">13.9 s</div>
<svg class="a" style="left:1021px;top:517.5px" width="52" height="18" viewBox="0 0 52 18" overflow="visible"><path d="M0 5.8 L10 5.6 L20 5.2 L30 4.8 L40 4.4 L45 4.2 L51.5 4.6 L51.5 15.8 L0 15.8 Z" fill="#a9d0f6"/><path d="M0 5.8 L10 5.6 L20 5.2 L30 4.8 L40 4.4 L45 4.2 L51.5 4.6" fill="none" stroke="#3f8fe0" stroke-width="0.9"/><line x1="0" y1="15.9" x2="52" y2="15.9" stroke="#7d9bbd" stroke-width="0.9"/><text x="0.5" y="8.2" font-family="Liberation Sans" font-size="8.3" fill="#2f3540">15.98 s</text></svg>
<div class="a" style="left:1084.8px;top:517.2px;width:37px;height:17.5px;background:#fdecee;border-radius:2.5px"><div class="t" style="left:4.8px;top:2.9px;font-size:10.2px;letter-spacing:-0.5px;font-weight:700;color:#b8304a">8 %</div><svg class="a" style="right:5.5px;top:5px" width="9" height="9" viewBox="0 0 9 9" fill="none" stroke="#b8304a" stroke-width="1"><path d="M0.8 8.2L8.2 0.8M2.8 0.8h5.4v5.4"/></svg></div>
<div class="t" style="left:980.8px;width:400px;text-align:right;top:518.3px;font-size:10.8px;color:#2e3440;font-weight:400;">$0.21</div>
<div class="a" style="left:1333px;top:530.9px;width:48px;height:4.5px;background:#e3e5ec"></div>
<div class="a" style="left:54px;top:544.7px;width:1332px;height:1px;background:#e8eaef"></div>
<svg class="a" style="left:59.8px;top:555.4px" width="18" height="18" viewBox="0 0 18 18"><rect width="18" height="18" rx="2.6" fill="#c9636f"/><path d="M2.8 6 L9 2.5 L15.2 6 L9 9.5 Z" fill="none" stroke="#fff" stroke-width="1.1" stroke-linejoin="round"/><path d="M2.8 8.05 L9 11.55 L15.2 8.05" fill="none" stroke="#fff" stroke-width="1.05" stroke-linejoin="round"/><path d="M2.8 10.10 L9 13.60 L15.2 10.10" fill="none" stroke="#fff" stroke-width="1.05" stroke-linejoin="round"/><path d="M2.8 12.15 L9 15.65 L15.2 12.15" fill="none" stroke="#fff" stroke-width="1.05" stroke-linejoin="round"/><path d="M2.8 6v6.15M15.2 6v6.15" stroke="#fff" stroke-width="1.05"/></svg>
<div class="t" style="left:121.4px;top:557.9px;font-size:11.25px;color:#2e3440;font-weight:400;">nyc_taxi_trips</div>
<div class="a bd" style="left:326.6px;top:556.5px;width:70.5px;height:15.8px;background:#e6f6ea;color:#1e7b3c;border-radius:2.5px">1 OK</div>
<div class="a bd" style="left:434px;top:556.7px;width:67px;height:15.5px;background:#fde8eb;color:#b5283d;border-radius:2.5px">ERROR</div>
<div class="t" style="left:228.6px;width:400px;text-align:right;top:558.5px;font-size:10.9px;color:#2e3440;font-weight:400;">36.0 s</div>
<div class="t" style="left:377.5px;width:400px;text-align:right;top:556.4px;font-size:11.25px;color:#2e3440;font-weight:400;">337</div>
<div class="a" style="left:729.5px;top:569.3px;width:48px;height:4.2px;background:#e3e5ec"></div>
<div class="a" style="left:729.5px;top:569.3px;width:1.5px;height:4.2px;background:#2f86de"></div>
<div class="t" style="left:513.0px;width:400px;text-align:right;top:556.4px;font-size:11.25px;color:#2e3440;font-weight:400;">100%</div>
<div class="a" style="left:865.3px;top:569.3px;width:47.7px;height:4.2px;background:#e3e5ec"></div>
<div class="a" style="left:865.3px;top:569.3px;width:48px;height:4.2px;background:#e5334b"></div>
<div class="t" style="left:607.6px;width:400px;text-align:right;top:558.5px;font-size:10.9px;color:#2e3440;font-weight:400;">41.8 s</div>
<svg class="a" style="left:1021px;top:555.9px" width="52" height="18" viewBox="0 0 52 18" overflow="visible"><path d="M0 6 L8 6.2 L14 5.4 L20 4.6 L26 5.2 L30 4.2 L34 4.8 L38 4 L42 5.4 L46 4.4 L48 2.8 L50 5.2 L51.5 4.4 L51.5 15.8 L0 15.8 Z" fill="#a9d0f6"/><path d="M0 6 L8 6.2 L14 5.4 L20 4.6 L26 5.2 L30 4.2 L34 4.8 L38 4 L42 5.4 L46 4.4 L48 2.8 L50 5.2 L51.5 4.4" fill="none" stroke="#3f8fe0" stroke-width="0.9"/><line x1="0" y1="15.9" x2="52" y2="15.9" stroke="#7d9bbd" stroke-width="0.9"/><circle cx="48" cy="2.8" r="1.1" fill="#1f2630"/><text x="0.5" y="8.2" font-family="Liberation Sans" font-size="8.3" fill="#2f3540">49.37 s</text></svg>
<div class="a" style="left:1084.8px;top:555.6px;width:37.5px;height:17.5px;background:#e6f6ea;border-radius:2.5px"><div class="t" style="left:4.8px;top:2.9px;font-size:10.2px;letter-spacing:-0.5px;font-weight:700;color:#247a42">3 %</div><svg class="a" style="right:5.5px;top:5px" width="9" height="9" viewBox="0 0 9 9" fill="none" stroke="#247a42" stroke-width="1"><path d="M0.8 0.8L8.2 8.2M8.2 2.8v5.4H2.8"/></svg></div>
<div class="t" style="left:966.5px;width:400px;text-align:right;top:558.6px;font-size:11.4px;color:#1f68b8;font-weight:400;">Instrument Cluster</div>
<svg class="a" style="left:1370px;top:559.8px" width="11" height="11" viewBox="0 0 11 11" fill="none" stroke="#1f68b8" stroke-width="1.2"><path d="M9.5 6.5v3h-8.5v-8.5h3M6 1h4v4M10 1L5 6"/></svg>
<div class="a" style="left:54px;top:583.2px;width:1332px;height:1px;background:#e8eaef"></div>
<svg class="a" style="left:59.8px;top:593.9px" width="18" height="18" viewBox="0 0 18 18"><rect width="18" height="18" rx="2.6" fill="#f5c400"/><path d="M2.8 6 L9 2.5 L15.2 6 L9 9.5 Z" fill="none" stroke="#1c1c1c" stroke-width="1.1" stroke-linejoin="round"/><path d="M2.8 8.05 L9 11.55 L15.2 8.05" fill="none" stroke="#1c1c1c" stroke-width="1.05" stroke-linejoin="round"/><path d="M2.8 10.10 L9 13.60 L15.2 10.10" fill="none" stroke="#1c1c1c" stroke-width="1.05" stroke-linejoin="round"/><path d="M2.8 12.15 L9 15.65 L15.2 12.15" fill="none" stroke="#1c1c1c" stroke-width="1.05" stroke-linejoin="round"/><path d="M2.8 6v6.15M15.2 6v6.15" stroke="#1c1c1c" stroke-width="1.05"/></svg>
<div class="t" style="left:121.4px;top:596.4px;font-size:11.25px;color:#2e3440;font-weight:400;">pricing_summary_report</div>
<div class="a bd" style="left:326.6px;top:595.0px;width:70.5px;height:15.8px;background:#e6f6ea;color:#1e7b3c;border-radius:2.5px">1 OK</div>
<div class="a bd" style="left:434px;top:595.2px;width:67px;height:15.5px;background:#e7f6ea;color:#1e7b3c;border-radius:2.5px">OK</div>
<div class="t" style="left:228.6px;width:400px;text-align:right;top:597.0px;font-size:10.9px;color:#2e3440;font-weight:400;">3 min 2 s</div>
<div class="t" style="left:377.5px;width:400px;text-align:right;top:594.9px;font-size:11.25px;color:#2e3440;font-weight:400;">336</div>
<div class="a" style="left:729.5px;top:607.8px;width:48px;height:4.2px;background:#e3e5ec"></div>
<div class="a" style="left:729.5px;top:607.8px;width:1.5px;height:4.2px;background:#2f86de"></div>
<div class="t" style="left:513.0px;width:400px;text-align:right;top:594.9px;font-size:11.25px;color:#2e3440;font-weight:400;">50.0%</div>
<div class="a" style="left:865.3px;top:607.8px;width:47.7px;height:4.2px;background:#e3e5ec"></div>
<div class="a" style="left:865.3px;top:607.8px;width:24px;height:4.2px;background:#e5334b"></div>
<div class="t" style="left:607.6px;width:400px;text-align:right;top:597.0px;font-size:10.9px;color:#2e3440;font-weight:400;">2 min 49 s</div>
<svg class="a" style="left:1021px;top:594.4px" width="52" height="18" viewBox="0 0 52 18" overflow="visible"><path d="M0 5.2 L10 4.8 L20 5 L30 5 L36 4.6 L42 5.4 L46 4.6 L51.5 4.8 L51.5 15.8 L0 15.8 Z" fill="#a9d0f6"/><path d="M0 5.2 L10 4.8 L20 5 L30 5 L36 4.6 L42 5.4 L46 4.6 L51.5 4.8" fill="none" stroke="#3f8fe0" stroke-width="0.9"/><line x1="0" y1="15.9" x2="52" y2="15.9" stroke="#7d9bbd" stroke-width="0.9"/><text x="0.5" y="8.2" font-family="Liberation Sans" font-size="8.3" fill="#2f3540">3.02 min</text></svg>
<div class="a" style="left:1084.8px;top:594.1px;width:37.5px;height:17.5px;background:#e6f6ea;border-radius:2.5px"><div class="t" style="left:4.8px;top:2.9px;font-size:10.2px;letter-spacing:-0.5px;font-weight:700;color:#247a42">2 %</div><svg class="a" style="right:5.5px;top:5px" width="9" height="9" viewBox="0 0 9 9" fill="none" stroke="#247a42" stroke-width="1"><path d="M0.8 0.8L8.2 8.2M8.2 2.8v5.4H2.8"/></svg></div>
<div class="t" style="left:966.5px;width:400px;text-align:right;top:597.1px;font-size:11.4px;color:#1f68b8;font-weight:400;">Instrument Cluster</div>
<svg class="a" style="left:1370px;top:598.3px" width="11" height="11" viewBox="0 0 11 11" fill="none" stroke="#1f68b8" stroke-width="1.2"><path d="M9.5 6.5v3h-8.5v-8.5h3M6 1h4v4M10 1L5 6"/></svg>
<div class="a" style="left:54px;top:621.6px;width:1332px;height:1px;background:#e8eaef"></div>
<div class="a" style="left:1174.4px;top:622.2px;width:71px;height:38.1px;background:#f79c0e"></div>
<div class="t" style="left:839.2px;width:400px;text-align:right;top:635.5px;font-size:10.7px;color:#fff;font-weight:400;">87.3%</div>
<svg class="a" style="left:59.8px;top:632.4px" width="18" height="18" viewBox="0 0 18 18"><rect width="18" height="18" rx="2.6" fill="#6f64cf"/><path d="M2.8 6 L9 2.5 L15.2 6 L9 9.5 Z" fill="none" stroke="#fff" stroke-width="1.1" stroke-linejoin="round"/><path d="M2.8 8.05 L9 11.55 L15.2 8.05" fill="none" stroke="#fff" stroke-width="1.05" stroke-linejoin="round"/><path d="M2.8 10.10 L9 13.60 L15.2 10.10" fill="none" stroke="#fff" stroke-width="1.05" stroke-linejoin="round"/><path d="M2.8 12.15 L9 15.65 L15.2 12.15" fill="none" stroke="#fff" stroke-width="1.05" stroke-linejoin="round"/><path d="M2.8 6v6.15M15.2 6v6.15" stroke="#fff" stroke-width="1.05"/></svg>
<div class="t" style="left:121.4px;top:628.7px;font-size:11.1px;color:#2e3440;font-weight:400;">inefficient-skewed-job</div>
<svg class="a" style="left:122.5px;top:645.4px" width="6" height="8" viewBox="0 0 6 8"><path d="M3.8 0L0.5 4.6h2.2L2 8l3.4-4.7H3.3z" fill="#6b7180"/></svg>
<div class="t" style="left:132.4px;top:643.9px;font-size:9.1px;color:#737985;font-weight:400;">1 RUNNING | 12 min 2 s</div>
<div class="a bd" style="left:326.6px;top:633.5px;width:70.5px;height:15.8px;background:#e6f6ea;color:#1e7b3c;border-radius:2.5px">1 OK</div>
<div class="a bd" style="left:434px;top:633.7px;width:67px;height:15.5px;background:#e7f6ea;color:#1e7b3c;border-radius:2.5px">OK</div>
<div class="t" style="left:228.6px;width:400px;text-align:right;top:635.5px;font-size:10.9px;color:#2e3440;font-weight:400;">15 min 24 s</div>
<div class="t" style="left:377.5px;width:400px;text-align:right;top:633.4px;font-size:11.25px;color:#2e3440;font-weight:400;">168</div>
<div class="a" style="left:729.5px;top:646.3px;width:48px;height:4.2px;background:#e3e5ec"></div>
<div class="a" style="left:729.5px;top:646.3px;width:1px;height:4.2px;background:#2f86de"></div>
<div class="t" style="left:513.0px;width:400px;text-align:right;top:633.4px;font-size:11.25px;color:#2e3440;font-weight:400;">0%</div>
<div class="a" style="left:865.3px;top:646.3px;width:47.7px;height:4.2px;background:#e3e5ec"></div>
<div class="t" style="left:607.6px;width:400px;text-align:right;top:635.5px;font-size:10.9px;color:#2e3440;font-weight:400;">16 min 37 s</div>
<svg class="a" style="left:1021px;top:632.9px" width="52" height="18" viewBox="0 0 52 18" overflow="visible"><path d="M0 5.8 L20 5.8 L36 5.6 L40 5.2 L44 6 L51.5 6 L51.5 15.8 L0 15.8 Z" fill="#a9d0f6"/><path d="M0 5.8 L20 5.8 L36 5.6 L40 5.2 L44 6 L51.5 6" fill="none" stroke="#3f8fe0" stroke-width="0.9"/><line x1="0" y1="15.9" x2="52" y2="15.9" stroke="#7d9bbd" stroke-width="0.9"/><text x="0.5" y="8.2" font-family="Liberation Sans" font-size="8.3" fill="#2f3540">18.33 min</text></svg>
<div class="a" style="left:1084.8px;top:632.6px;width:37.5px;height:17.5px;background:#e6f6ea;border-radius:2.5px"><div class="t" style="left:4.8px;top:2.9px;font-size:10.2px;letter-spacing:-0.5px;font-weight:700;color:#247a42">3 %</div><svg class="a" style="right:5.5px;top:5px" width="9" height="9" viewBox="0 0 9 9" fill="none" stroke="#247a42" stroke-width="1"><path d="M0.8 0.8L8.2 8.2M8.2 2.8v5.4H2.8"/></svg></div>
<div class="t" style="left:980.8px;width:400px;text-align:right;top:633.7px;font-size:10.8px;color:#2e3440;font-weight:400;">$9.70</div>
<div class="a" style="left:1333px;top:646.3px;width:48px;height:4.5px;background:#e3e5ec"></div>
<div class="a" style="left:54px;top:660.1px;width:1332px;height:1px;background:#e8eaef"></div>
<div class="a" style="left:1174.4px;top:660.7px;width:71px;height:38.1px;background:#fdf5e4"></div>
<div class="t" style="left:839.2px;width:400px;text-align:right;top:674.0px;font-size:10.7px;color:#2e3440;font-weight:400;">57.9%</div>
<svg class="a" style="left:59.8px;top:670.9px" width="18" height="18" viewBox="0 0 18 18"><rect width="18" height="18" rx="2.6" fill="#f5c400"/><path d="M2.8 6 L9 2.5 L15.2 6 L9 9.5 Z" fill="none" stroke="#1c1c1c" stroke-width="1.1" stroke-linejoin="round"/><path d="M2.8 8.05 L9 11.55 L15.2 8.05" fill="none" stroke="#1c1c1c" stroke-width="1.05" stroke-linejoin="round"/><path d="M2.8 10.10 L9 13.60 L15.2 10.10" fill="none" stroke="#1c1c1c" stroke-width="1.05" stroke-linejoin="round"/><path d="M2.8 12.15 L9 15.65 L15.2 12.15" fill="none" stroke="#1c1c1c" stroke-width="1.05" stroke-linejoin="round"/><path d="M2.8 6v6.15M15.2 6v6.15" stroke="#1c1c1c" stroke-width="1.05"/></svg>
<div class="t" style="left:121.4px;top:673.4px;font-size:11.25px;color:#2e3440;font-weight:400;">profit_measure_by_product_type</div>
<div class="a bd" style="left:326.6px;top:672.0px;width:70.5px;height:15.8px;background:#e6f6ea;color:#1e7b3c;border-radius:2.5px">1 OK</div>
<div class="a bd" style="left:434px;top:672.2px;width:67px;height:15.5px;background:#e7f6ea;color:#1e7b3c;border-radius:2.5px">OK</div>
<div class="t" style="left:228.6px;width:400px;text-align:right;top:674.0px;font-size:10.9px;color:#2e3440;font-weight:400;">41 min 29 s</div>
<div class="t" style="left:377.5px;width:400px;text-align:right;top:671.9px;font-size:11.25px;color:#2e3440;font-weight:400;">84</div>
<div class="a" style="left:729.5px;top:684.8px;width:48px;height:4.2px;background:#e3e5ec"></div>
<div class="t" style="left:513.0px;width:400px;text-align:right;top:671.9px;font-size:11.25px;color:#2e3440;font-weight:400;">0%</div>
<div class="a" style="left:865.3px;top:684.8px;width:47.7px;height:4.2px;background:#e3e5ec"></div>
<div class="t" style="left:607.6px;width:400px;text-align:right;top:674.0px;font-size:10.9px;color:#2e3440;font-weight:400;">43 min 0 s</div>
<svg class="a" style="left:1021px;top:671.4px" width="52" height="18" viewBox="0 0 52 18" overflow="visible"><path d="M0 5.8 L20 5.8 L36 5.6 L40 5.2 L44 6 L51.5 5.6 L51.5 15.8 L0 15.8 Z" fill="#a9d0f6"/><path d="M0 5.8 L20 5.8 L36 5.6 L40 5.2 L44 6 L51.5 5.6" fill="none" stroke="#3f8fe0" stroke-width="0.9"/><line x1="0" y1="15.9" x2="52" y2="15.9" stroke="#7d9bbd" stroke-width="0.9"/><text x="0.5" y="8.2" font-family="Liberation Sans" font-size="8.3" fill="#2f3540">49.17 min</text></svg>
<div class="a" style="left:1084.8px;top:671.1px;width:46px;height:17.5px;background:#fdecee;border-radius:2.5px"><div class="t" style="left:4.8px;top:2.9px;font-size:10.2px;letter-spacing:-0.5px;font-weight:700;color:#b8304a">< 1 %</div><svg class="a" style="right:6px;top:8.5px" width="9" height="2" viewBox="0 0 9 2"><path d="M0.5 1h8" stroke="#b8304a" stroke-width="1.1"/></svg></div>
<div class="t" style="left:980.8px;width:400px;text-align:right;top:672.2px;font-size:10.8px;color:#2e3440;font-weight:400;">$3.15</div>
<div class="a" style="left:1333px;top:684.8px;width:48px;height:4.5px;background:#e3e5ec"></div>
<div class="a" style="left:54px;top:698.6px;width:1332px;height:1px;background:#e8eaef"></div>
<div class="a" style="left:1174.4px;top:699.2px;width:71px;height:38.1px;background:#f79c0e"></div>
<div class="t" style="left:839.2px;width:400px;text-align:right;top:712.4px;font-size:10.7px;color:#fff;font-weight:400;">73.3%</div>
<svg class="a" style="left:59.8px;top:709.3px" width="18" height="18" viewBox="0 0 18 18"><rect width="18" height="18" rx="2.6" fill="#6f64cf"/><path d="M2.8 6 L9 2.5 L15.2 6 L9 9.5 Z" fill="none" stroke="#fff" stroke-width="1.1" stroke-linejoin="round"/><path d="M2.8 8.05 L9 11.55 L15.2 8.05" fill="none" stroke="#fff" stroke-width="1.05" stroke-linejoin="round"/><path d="M2.8 10.10 L9 13.60 L15.2 10.10" fill="none" stroke="#fff" stroke-width="1.05" stroke-linejoin="round"/><path d="M2.8 12.15 L9 15.65 L15.2 12.15" fill="none" stroke="#fff" stroke-width="1.05" stroke-linejoin="round"/><path d="M2.8 6v6.15M15.2 6v6.15" stroke="#fff" stroke-width="1.05"/></svg>
<div class="t" style="left:121.4px;top:711.8px;font-size:11.25px;color:#2e3440;font-weight:400;">price_distribution</div>
<div class="a bd" style="left:326.6px;top:710.4px;width:70.5px;height:15.8px;background:#e6f6ea;color:#1e7b3c;border-radius:2.5px">1 OK</div>
<div class="a bd" style="left:434px;top:710.6px;width:67px;height:15.5px;background:#e7f6ea;color:#1e7b3c;border-radius:2.5px">OK</div>
<div class="t" style="left:228.6px;width:400px;text-align:right;top:712.4px;font-size:10.9px;color:#2e3440;font-weight:400;">18 min 57 s</div>
<div class="t" style="left:377.5px;width:400px;text-align:right;top:710.3px;font-size:11.25px;color:#2e3440;font-weight:400;">84</div>
<div class="a" style="left:729.5px;top:723.2px;width:48px;height:4.2px;background:#e3e5ec"></div>
<div class="t" style="left:513.0px;width:400px;text-align:right;top:710.3px;font-size:11.25px;color:#2e3440;font-weight:400;">0%</div>
<div class="a" style="left:865.3px;top:723.2px;width:47.7px;height:4.2px;background:#e3e5ec"></div>
<div class="t" style="left:607.6px;width:400px;text-align:right;top:712.4px;font-size:10.9px;color:#2e3440;font-weight:400;">19 min 50 s</div>
<svg class="a" style="left:1021px;top:709.8px" width="52" height="18" viewBox="0 0 52 18" overflow="visible"><path d="M0 5.8 L20 5.8 L36 5.6 L40 5.2 L44 6 L51.5 5.6 L51.5 15.8 L0 15.8 Z" fill="#a9d0f6"/><path d="M0 5.8 L20 5.8 L36 5.6 L40 5.2 L44 6 L51.5 5.6" fill="none" stroke="#3f8fe0" stroke-width="0.9"/><line x1="0" y1="15.9" x2="52" y2="15.9" stroke="#7d9bbd" stroke-width="0.9"/><text x="0.5" y="8.2" font-family="Liberation Sans" font-size="8.3" fill="#2f3540">24.97 min</text></svg>
<div class="a" style="left:1084.8px;top:709.5px;width:46px;height:17.5px;background:#fdecee;border-radius:2.5px"><div class="t" style="left:4.8px;top:2.9px;font-size:10.2px;letter-spacing:-0.5px;font-weight:700;color:#b8304a">< 1 %</div><svg class="a" style="right:6px;top:8.5px" width="9" height="2" viewBox="0 0 9 2"><path d="M0.5 1h8" stroke="#b8304a" stroke-width="1.1"/></svg></div>
<div class="t" style="left:980.8px;width:400px;text-align:right;top:710.6px;font-size:10.8px;color:#2e3440;font-weight:400;">$1.61</div>
<div class="a" style="left:1333px;top:723.2px;width:48px;height:4.5px;background:#e3e5ec"></div>
<div class="a" style="left:41px;top:36px;width:1px;height:688px;background:rgba(20,30,60,0.04)"></div>
</body></html>
